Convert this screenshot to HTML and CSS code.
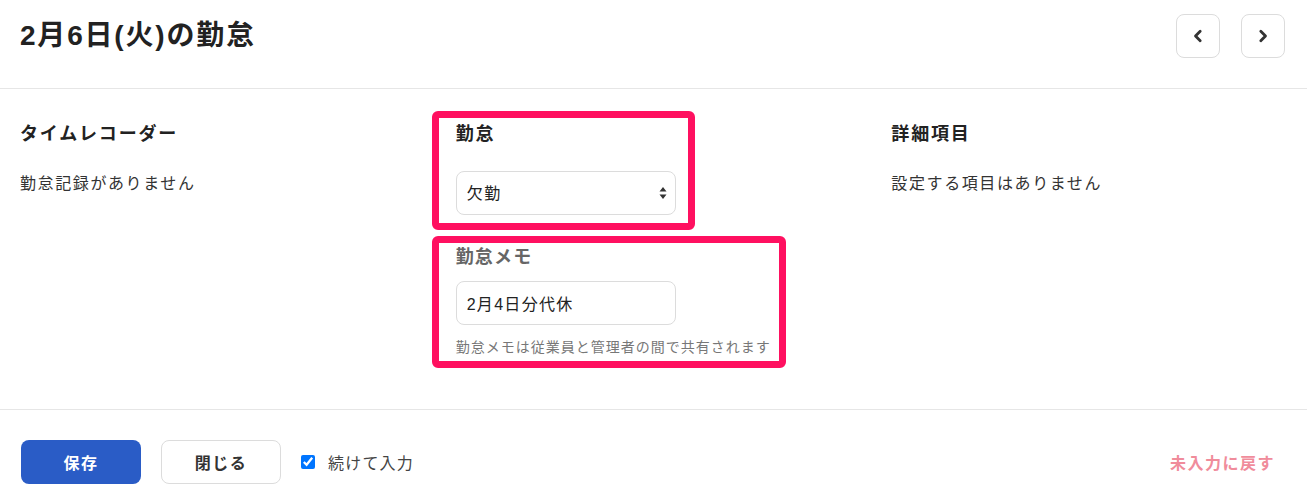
FILE: index.html
```html
<!DOCTYPE html>
<html>
<head>
    <meta charset="utf-8" />
    <title>勤怠</title>
    <link rel="stylesheet" href="styles.css">
</head>
<body class="body">
    <div class="header">
        <h1 class="title">2月6日(火)の勤怠</h1>
        <div class="nav">
            <button class="navBtn">
                <svg width="12" height="14" viewBox="0 0 12 14"><path d="M8.2 2.2 L3.5 7 L8.2 11.8" fill="none" stroke="#333" stroke-width="2.8" stroke-linecap="round" stroke-linejoin="round"/></svg>
            </button>
            <button class="navBtn">
                <svg width="12" height="14" viewBox="0 0 12 14"><path d="M3.8 2.2 L8.5 7 L3.8 11.8" fill="none" stroke="#333" stroke-width="2.8" stroke-linecap="round" stroke-linejoin="round"/></svg>
            </button>
        </div>
    </div>

    <div class="main">
        <div class="col">
            <h3 class="heading">タイムレコーダー</h3>
            <p class="text">勤怠記録がありません</p>
        </div>
        <div class="col">
            <div class="mark markKintai"></div>
            <div class="mark markMemo"></div>
            <h3 class="heading">勤怠</h3>
            <div class="selectWrap">
                <select class="select">
                    <option>欠勤</option>
                </select>
                <svg class="selectArrow" width="8" height="14" viewBox="0 0 8 14"><path d="M4 1 L7.5 5.5 L0.5 5.5 Z M4 13 L7.5 8.5 L0.5 8.5 Z" fill="#333"/></svg>
            </div>
            <h3 class="label">勤怠メモ</h3>
            <input class="input" value="2月4日分代休" />
            <p class="help">勤怠メモは従業員と管理者の間で共有されます</p>
        </div>
        <div class="col">
            <h3 class="heading">詳細項目</h3>
            <p class="text">設定する項目はありません</p>
        </div>
    </div>

    <div class="footer">
        <button class="btn btnSave">保存</button>
        <button class="btn btnClose">閉じる</button>
        <label class="check"><input type="checkbox" class="checkbox" checked />続けて入力</label>
        <a class="reset">未入力に戻す</a>
    </div>
</body>
</html>
```

FILE: styles.css
```css
.body {
    margin: 0;
    background-color: white;
    color: #222;
    font-family: "Liberation Sans", "Noto Sans CJK JP", sans-serif;
}
.header {
    display: flex;
    align-items: center;
    justify-content: space-between;
    padding: 14px 22px 30px 20px;
    border-bottom: 1px solid #e6e6e6;
}
.title {
    margin: 0;
    font-size: 28px;
    font-weight: bold;
    line-height: 44px;
    letter-spacing: 1.8px;
}
.nav {
    display: flex;
    gap: 21px;
}
.navBtn {
    width: 44px;
    height: 44px;
    padding: 0;
    display: flex;
    align-items: center;
    justify-content: center;
    background-color: white;
    border: 1px solid #dcdcdc;
    border-radius: 8px;
}
.main {
    display: grid;
    grid-template-columns: repeat(3, 1fr);
    column-gap: 40px;
    padding: 32px 20px 52px 20px;
    border-bottom: 1px solid #e6e6e6;
}
.col {
    position: relative;
}
.heading {
    margin: 0;
    font-size: 18px;
    font-weight: bold;
    line-height: 27px;
    letter-spacing: 1.8px;
}
.text {
    margin: 24px 0 0 0;
    font-size: 16px;
    line-height: 24px;
    letter-spacing: 1.6px;
    color: #333;
}
.selectWrap {
    position: relative;
    width: 220px;
    margin-top: 23px;
}
.select {
    appearance: none;
    width: 220px;
    height: 44px;
    padding: 0 10px;
    font-family: inherit;
    font-size: 16px;
    letter-spacing: 1.6px;
    color: #222;
    background-color: white;
    border: 1px solid #dcdcdc;
    border-radius: 8px;
}
.selectArrow {
    position: absolute;
    right: 9px;
    top: 15px;
}
.label {
    margin: 29px 0 0 0;
    font-size: 18px;
    font-weight: bold;
    line-height: 27px;
    letter-spacing: 1.2px;
    color: #666;
}
.input {
    display: block;
    box-sizing: border-box;
    width: 220px;
    height: 44px;
    margin-top: 10px;
    padding: 0 10px;
    font-family: inherit;
    font-size: 16px;
    letter-spacing: 1.3px;
    color: #222;
    border: 1px solid #dcdcdc;
    border-radius: 8px;
}
.help {
    margin: 12px 0 0 0;
    font-size: 14px;
    line-height: 20px;
    letter-spacing: 1px;
    color: #777;
}
.mark {
    position: absolute;
    border: 7px solid #ff1060;
    border-radius: 6px;
}
.markKintai {
    left: -24px;
    top: -10px;
    width: 249px;
    height: 105px;
}
.markMemo {
    left: -24px;
    top: 115px;
    width: 340px;
    height: 118px;
}
.footer {
    display: flex;
    align-items: center;
    gap: 20px;
    padding: 30px 32px 30px 21px;
}
.btn {
    width: 120px;
    height: 44px;
    font-family: inherit;
    font-size: 16px;
    font-weight: bold;
    letter-spacing: 1.5px;
    border-radius: 8px;
}
.btnSave {
    color: white;
    background-color: #2a5cc6;
    border: none;
}
.btnClose {
    color: #333;
    background-color: white;
    border: 1px solid #dcdcdc;
}
.check {
    display: flex;
    align-items: center;
    gap: 13px;
    font-size: 16px;
    letter-spacing: 1.2px;
    color: #444;
}
.checkbox {
    width: 14px;
    height: 14px;
    margin: 0;
}
.reset {
    margin-left: auto;
    font-size: 16px;
    font-weight: bold;
    letter-spacing: 1.5px;
    color: #f08c9b;
}
```
